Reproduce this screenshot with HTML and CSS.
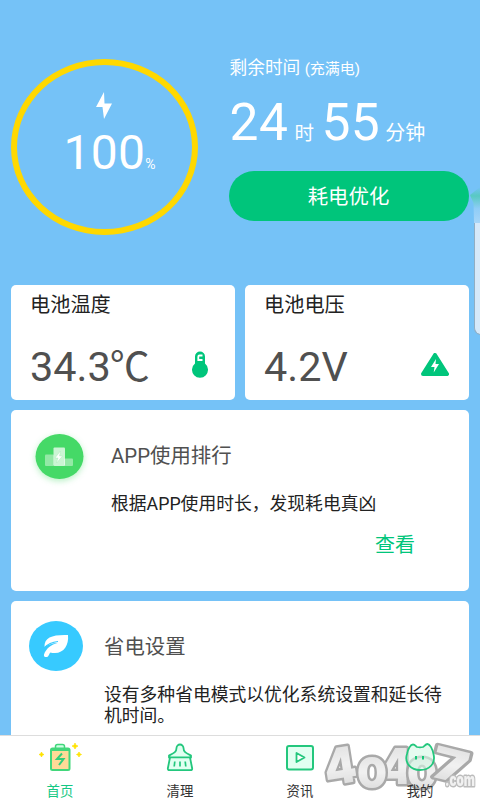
FILE: index.html
```html
<!DOCTYPE html>
<html lang="zh-CN">
<head>
<meta charset="utf-8">
<title>电池管理</title>
<link rel="stylesheet" href="styles.css">
</head>
<body>
<main class="content">
  <section class="hero">
    <div class="gauge">
      <svg class="bolt" width="16" height="27" viewBox="0 0 16 27"><path d="M8 0 0 15h6.500L8 27l8-15.500H8.500z" fill="#fff"/></svg>
      <div class="percent"><span class="percent-num">100</span><span class="percent-sign">%</span></div>
    </div>
    <div class="remain">
      <div class="remain-title">剩余时间 <small>(充满电)</small></div>
      <div class="time"><b>24</b><span class="hour">时</span><b>55</b><span class="minute">分钟</span></div>
      <button class="optimize">耗电优化</button>
    </div>
  </section>
  <section class="stats">
    <article class="card stat">
      <h2>电池温度</h2>
      <div class="stat-row"><span>34.3<i class="celsius">℃</i></span>
        <svg class="thermo" width="16" height="28" viewBox="0 0 16 28"><path d="M3 5.500a5 5 0 0 1 10 0v7a8 8 0 1 1-10 0z" fill="#00c57b"/><path d="M10.500 4.500H7.500a1.200 1.200 0 0 0-1.200 1.200v3.300H10.500" fill="none" stroke="#fff" stroke-width="1.800"/></svg>
      </div>
    </article>
    <article class="card stat">
      <h2>电池电压</h2>
      <div class="stat-row"><span>4.2V</span>
        <svg class="volt" width="28" height="23" viewBox="0 0 28 23"><path d="M14 2 26 21H2z" fill="#00c57b" stroke="#00c57b" stroke-width="4" stroke-linejoin="round"/><path d="m15 6-5 8h3.500l-.8 5.500L18 11h-3.500z" fill="#fff"/></svg>
      </div>
    </article>
  </section>
  <article class="card feature rank">
    <svg class="rank-icon" width="60" height="60" viewBox="0 0 60 60"><ellipse cx="30.500" cy="27.500" rx="24" ry="22.500" fill="#45d967"/><rect x="16" y="25.500" width="9" height="11.500" rx="1" fill="#fff" opacity=".42"/><rect x="35" y="29.500" width="9" height="7.500" rx="1" fill="#fff" opacity=".42"/><rect x="24.500" y="18.500" width="11.500" height="18.500" rx="1" fill="#fff" opacity=".72"/><path d="m31.500 22-5.500 7h3l-1.500 5 6-7h-3z" fill="#fff" stroke="#a5eab3" stroke-width=".4"/></svg>
    <div class="feature-text">
      <h3>APP使用排行</h3>
      <p>根据APP使用时长<span class="comma">，</span>发现耗电真凶</p>
      <a class="view">查看</a>
    </div>
  </article>
  <article class="card feature saver">
    <svg class="leaf" width="54" height="50" viewBox="0 0 54 50"><ellipse cx="27" cy="25" rx="27" ry="25" fill="#37caff"/><path d="M15.500 26C15 16 24 13.500 39 14c1 10-4 18-13 18-2 0-3.500 0-4.500-.5-1.500 1-1.500 4-3.500 4.500s-3.500-.7-3-2.500c2-6 7.500-10 13.500-11.500-5 .2-9.500 1.500-13 4z" fill="#fff"/><path d="M15 27c4-4.200 8.500-6 14-6.500" fill="none" stroke="#37caff" stroke-width="1.200"/></svg>
    <div class="feature-text">
      <h3>省电设置</h3>
      <p>设有多种省电模式以优化系统设置和延长待机时间。</p>
    </div>
  </article>
</main>
<div class="drawer"></div>
<div class="drawer-glow"></div>
<nav class="tabs">
  <a class="tab active">
    <svg width="44" height="30" viewBox="0 0 44 30"><path d="M17.500 5V3.500q0-2 2-2h5q2 0 2 2V5" fill="#cfffe6" stroke="#42d77b" stroke-width="1.500"/><rect x="13" y="5.500" width="18.500" height="21.500" rx="1.500" fill="#ffda97" stroke="#42d77b" stroke-width="2"/><path d="M13 7h18.500" stroke="#42d77b" stroke-width="2"/><path d="m24 10.500-5 5.500h6.500L21 22" fill="none" stroke="#32cf79" stroke-width="2"/><path d="M37 0q.5 3 3 3-2.500.5-3 3-.5-2.500-3-3 2.500 0 3-3zM41 9q.5 2.200 2.500 2.500-2 .3-2.500 2.500-.5-2.200-2.500-2.500 2-.3 2.500-2.500zM3.500 9q.5 2.200 2.500 2.500-2 .3-2.500 2.500Q3 11.800 1 11.500 3 11.200 3.500 9z" fill="#ffe300" stroke="#ffe300" stroke-width=".7"/></svg><span>首页</span>
  </a>
  <a class="tab">
    <svg width="30" height="30" viewBox="0 0 30 30"><path d="M11.500 5a3.500 3.500 0 0 1 7 0c0 4 2.500 5 7.500 7.500v2H25l2.200 11q0 1.700-1.700 1.700H4.500q-1.700 0-1.700-1.700L5 14.500H4v-2C9 10 11.500 9 11.500 5z" fill="#e1fff1" stroke="#23c77d" stroke-width="1.800" stroke-linejoin="round"/><path d="M4.500 14.300h21M9.800 18.500l-.6 5M15 18.500v5M20.200 18.500l.6 5" stroke="#23c77d" stroke-width="1.700"/></svg><span>清理</span>
  </a>
  <a class="tab">
    <svg width="30" height="30" viewBox="0 0 30 30"><rect x="2" y="3" width="26" height="23.500" rx="2" fill="#e1fff1" stroke="#23c77d" stroke-width="2"/><path d="m11.500 10 8 4.500-8 4.500z" fill="#fff" stroke="#23c77d" stroke-width="1.800" stroke-linejoin="round"/></svg><span>资讯</span>
  </a>
  <a class="tab">
    <svg width="32" height="30" viewBox="0 0 32 30"><path d="M3 11c1-5 3.500-9.500 6-9.500 2 0 3 2 4 2.500 2 .5 4 .5 6 0 1.500-1 2.500-3 4.500-3 2.500 0 5 5 6 10C32 21 25 27 16 27S0 20 3 11z" fill="#d5f8e6" fill-opacity=".6" stroke="#23c77d" stroke-width="1.800"/><path d="M12 13v3.500M19 13v3.500" stroke="#16c878" stroke-width="2"/></svg><span>我的</span>
  </a>
</nav>
<svg class="watermark" width="160" height="60" viewBox="0 0 160 60">
  <defs><linearGradient id="metal" x1="0" y1="0" x2="0" y2="1"><stop offset="0" stop-color="#d2d2d2"/><stop offset=".5" stop-color="#eee"/><stop offset="1" stop-color="#c9c9c9"/></linearGradient></defs>
  <g class="wm-digits">
    <text transform="translate(7 46) rotate(-9)" font-size="50" textLength="32" lengthAdjust="spacingAndGlyphs">4</text>
    <text transform="translate(60 44)" font-size="49" textLength="32" lengthAdjust="spacingAndGlyphs">4</text>
    <text transform="translate(37 48)" font-size="43" textLength="30" lengthAdjust="spacingAndGlyphs">0</text>
    <text transform="translate(87 48)" font-size="41" textLength="30" lengthAdjust="spacingAndGlyphs">0</text>
    <text transform="translate(109 36) rotate(14)" font-size="44" textLength="36" lengthAdjust="spacingAndGlyphs">7</text>
  </g>
  <text class="wm-com" x="125" y="46" textLength="30" lengthAdjust="spacingAndGlyphs">.com</text>
</svg>
</body>
</html>
```

FILE: styles.css
```css
* { box-sizing: border-box; }
body {
  margin: 0;
  width: 480px;
  height: 800px;
  overflow: hidden;
  position: relative;
  display: flex;
  flex-direction: column;
  background: #75c2f7;
  font-family: Roboto, "Noto Sans CJK SC", sans-serif;
  color: #222;
}
h2, h3, p { margin: 0; font-weight: 400; }
svg { display: block; flex: none; }
.content { height: 735px; overflow: hidden; padding: 59px 11px 0; }

.hero { display: flex; height: 226px; }
.gauge {
  width: 187px;
  height: 176px;
  margin-left: -.5px;
  border: 6px solid #ffd800;
  border-radius: 50%;
  display: flex;
  flex-direction: column;
  align-items: center;
  padding-top: 27px;
  color: #fff;
}
.percent { display: flex; align-items: baseline; margin: 6px 0 0 11px; line-height: 56px; }
.percent-num { font-size: 48px; letter-spacing: .3px; }
.percent-sign { font-size: 14px; }
.remain { width: 240px; margin-left: 31px; color: #fff; }
.remain-title { padding-left: 1px; font-size: 17.700px; line-height: 19px; white-space: nowrap; }
.remain-title small { font-size: 15px; }
.time { display: flex; align-items: baseline; height: 60px; margin: 14px 0 0 1px; line-height: 60px; }
.time b { font-weight: 400; font-size: 51.500px; letter-spacing: .5px; }
.hour { width: 33px; padding-left: 6px; font-size: 19.500px; }
.minute { padding-left: 5px; font-size: 20px; }
.optimize {
  display: block;
  width: 240px;
  height: 50px;
  margin-top: 18px;
  padding: 0 0 2px;
  border: 0;
  border-radius: 25px;
  background: #00c57b;
  color: #fff;
  font: inherit;
  font-size: 20.400px;
}

.card { background: #fff; border-radius: 5px; }
.stats { display: grid; grid-template-columns: 224px 224px; gap: 10px; }
.stat { height: 115px; padding: 9px 20px 0 19px; }
.stat h2 { font-size: 20.200px; line-height: 23px; }
.stat-row { display: flex; justify-content: space-between; height: 60px; margin-top: 20px; line-height: 60px; font-size: 41.400px; color: #505050; }
.stat-row span { white-space: nowrap; }
.celsius { font-style: normal; font-size: 40px; margin-left: -1px; }
.thermo { margin: 14px 7px 0 0; }
.volt { margin: 16px 0 0; }

.feature { display: flex; margin-top: 10px; }
.rank { height: 181px; }
.rank-icon { margin: 19px 0 0 18px; filter: drop-shadow(0 2px 3px #45d96766); }
.rank .feature-text { margin-left: 22px; width: 304px; padding-top: 34px; }
.feature h3 { font-size: 20.400px; line-height: 25px; color: #505050; }
.feature p { font-size: 17.800px; line-height: 21px; }
.rank p { margin-top: 23px; white-space: nowrap; }
.comma { font-family: "Noto Sans CJK TC", sans-serif; }
.view { display: block; margin-top: 19px; text-align: right; font-size: 20px; line-height: 25px; color: #00c57b; }
.saver { height: 170px; }
.leaf { margin: 20px 0 0 18px; }
.saver .feature-text { width: 340px; margin-left: 21px; padding-top: 34px; }
.saver p { margin-top: 24px; }

.tabs {
  display: grid;
  grid-template-columns: repeat(4, 1fr);
  height: 65px;
  padding-top: 7px;
  border-top: 1px solid #ddd;
  background: #fff;
}
.tab { position: relative; z-index: 2; display: flex; flex-direction: column; align-items: center; font-size: 13.400px; line-height: 20px; color: #333; }
.tab span { margin-top: 9px; }
.active { color: #16c884; }

.drawer {
  position: absolute;
  left: 474px;
  top: 220px;
  width: 12px;
  height: 115px;
  background: #d5e9fa;
  border: 1px solid #91aec3;
  border-top: 0;
  border-radius: 0 0 0 7px;
}
.drawer-glow {
  position: absolute;
  left: 470px;
  top: 187px;
  width: 10px;
  height: 36px;
  background: linear-gradient(#65c9cf00, #58c9c2 25%, #8fcdf7 60%, #a7d6f8);
  clip-path: polygon(0 22%, 100% 0, 100% 100%, 40% 100%, 35% 45%);
}
.watermark { position: absolute; left: 320px; top: 740px; overflow: visible; opacity: .78; }
.wm-digits, .wm-com { font-family: Inter, Roboto, sans-serif; font-weight: 900; paint-order: stroke; stroke-linejoin: round; }
.wm-digits { fill: url(#metal); stroke: #929292; stroke-width: 5px; }
.wm-com { font-size: 17px; fill: #eee; stroke: #aaa; stroke-width: 3px; }
```
